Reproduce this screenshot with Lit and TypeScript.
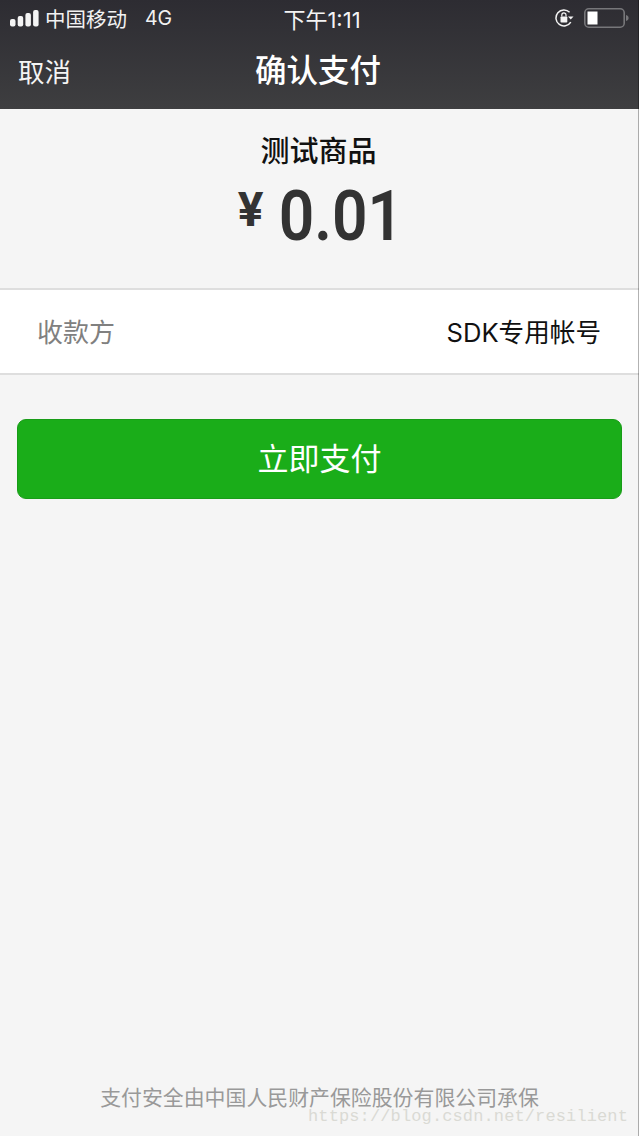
import { LitElement, html, css } from "lit";
import { customElement } from "lit/decorators.js";

@customElement("app-root")
export class AppRoot extends LitElement {
  static styles = css`
    :host {
      display: block;
      font-family: "Inter", "Noto Sans CJK SC", sans-serif;
    }
    .page {
      position: relative;
      width: 639px;
      height: 1136px;
      box-sizing: border-box;
      background: #f5f5f5;
      display: flex;
      flex-direction: column;
      overflow: hidden;
    }
    .header {
      height: 109px;
      background: linear-gradient(#2d2c32, #3e3e40);
      color: #fff;
      display: flex;
      flex-direction: column;
    }
    .status {
      height: 36px;
      display: grid;
      grid-template-columns: 1fr auto 1fr;
      align-items: center;
      padding: 0 10px;
    }
    .status-left {
      display: flex;
      align-items: center;
      font-size: 20.5px;
      color: #f2f2f2;
    }
    .signal { margin-right: 6px; }
    .net { margin-left: 18px; font-size: 19.5px; }
    .time { font-size: 22px; color: #f4f4f4; margin-left: 5px; }
    .status-right {
      display: flex;
      justify-content: flex-end;
      align-items: center;
      gap: 10px;
    }
    .nav {
      flex: 1;
      display: grid;
      grid-template-columns: 1fr auto 1fr;
      align-items: center;
      padding: 0 21px 6px 18px;
    }
    .cancel { font-size: 26.5px; color: #f4f4f4; line-height: 40px; margin-top: 4px; }
    .title { font-size: 31.5px; font-weight: 500; line-height: 40px; margin-top: 2px; }
    .summary {
      height: 179px;
      box-sizing: border-box;
      padding-top: 22px;
      display: flex;
      flex-direction: column;
      align-items: center;
    }
    .product { font-size: 29px; font-weight: 500; line-height: 42px; color: #111; margin-right: 2px; }
    .amount {
      display: flex;
      align-items: baseline;
      margin-top: 8px;
      padding-left: 10px;
      color: #333;
      font-family: "Roboto", sans-serif;
      font-weight: 700;
      line-height: 70px;
    }
    .yen { font-size: 48px; margin-right: 8px; position: relative; top: -14px; }
    .value { display: inline-block; font-size: 70px; transform: scaleX(0.89); font-weight: 600; }
    .row {
      height: 87px;
      box-sizing: border-box;
      background: #fff;
      border-top: 2px solid #dedede;
      border-bottom: 2px solid #dedede;
      display: flex;
      justify-content: space-between;
      align-items: center;
      padding: 0 38px 2px 37px;
    }
    .label { color: #808080; font-size: 26px; }
    .payee { color: #111; font-size: 25.6px; }
    .pay {
      margin: 44px 17px 0;
      height: 80px;
      box-sizing: border-box;
      border: 1px solid #199c18;
      border-radius: 9px;
      background: #1aad19;
      color: #fff;
      font: inherit;
      font-size: 31px;
      padding: 0 0 5px;
    }
    .footer {
      margin-top: auto;
      padding-bottom: 22px;
      text-align: center;
      font-size: 20.9px;
      line-height: 32px;
      color: #999;
    }
    .edge {
      position: absolute;
      top: 0;
      right: 0;
      bottom: 0;
      width: 1px;
      background: rgba(0, 0, 0, 0.3);
    }
    .watermark {
      position: absolute;
      right: 11px;
      bottom: 10px;
      font-family: "Liberation Mono", monospace;
      font-size: 17px;
      letter-spacing: 0.12px;
      color: #dadad4;
      white-space: nowrap;
    }
  `;

  render() {
    return html`
      <div class="page">
        <header class="header">
          <div class="status">
            <div class="status-left">
              <svg class="signal" width="29" height="17" viewBox="0 0 29 17" fill="#f4f4f4">
                <rect x="0" y="9" width="5.5" height="7.5" rx="2"></rect>
                <rect x="7.7" y="6" width="5.5" height="10.5" rx="2"></rect>
                <rect x="15.4" y="3" width="5.5" height="13.5" rx="2"></rect>
                <rect x="23.1" y="0" width="5.5" height="16.5" rx="2"></rect>
              </svg>
              <span>中国移动</span><span class="net">4G</span>
            </div>
            <div class="time">下午1:11</div>
            <div class="status-right">
              <svg width="19" height="18" viewBox="0 0 19 18" fill="none">
                <path d="M14.6 3.3A8 8 0 1 0 15.8 13.2" stroke="#f4f4f4" stroke-width="1.5"></path>
                <path d="M13 7.5h5.5l-2.75 3z" fill="#f4f4f4"></path>
                <rect x="5.5" y="7.5" width="6.8" height="6" rx="0.8" fill="#f4f4f4"></rect>
                <path d="M6.8 7.5V6a2.1 2.1 0 0 1 4.2 0v1.5" stroke="#f4f4f4" stroke-width="1.2"></path>
              </svg>
              <svg width="45" height="20" viewBox="0 0 45 20" fill="none">
                <rect x="0.8" y="0.8" width="39.4" height="18.4" rx="4" stroke="#77777a" stroke-width="1.6"></rect>
                <rect x="3.5" y="3.5" width="10" height="13" fill="#fff"></rect>
                <path d="M42 7c1.6.4 2.6 1.5 2.6 3s-1 2.6-2.6 3z" fill="#77777a"></path>
              </svg>
            </div>
          </div>
          <div class="nav">
            <span class="cancel">取消</span>
            <span class="title">确认支付</span>
            <span></span>
          </div>
        </header>
        <section class="summary">
          <div class="product">测试商品</div>
          <div class="amount"><span class="yen">¥</span><span class="value">0.01</span></div>
        </section>
        <section class="row">
          <span class="label">收款方</span>
          <span class="payee">SDK专用帐号</span>
        </section>
        <button class="pay">立即支付</button>
        <footer class="footer">支付安全由中国人民财产保险股份有限公司承保</footer>
        <div class="edge"></div>
        <div class="watermark">https://blog.csdn.net/resilient</div>
      </div>
    `;
  }
}
